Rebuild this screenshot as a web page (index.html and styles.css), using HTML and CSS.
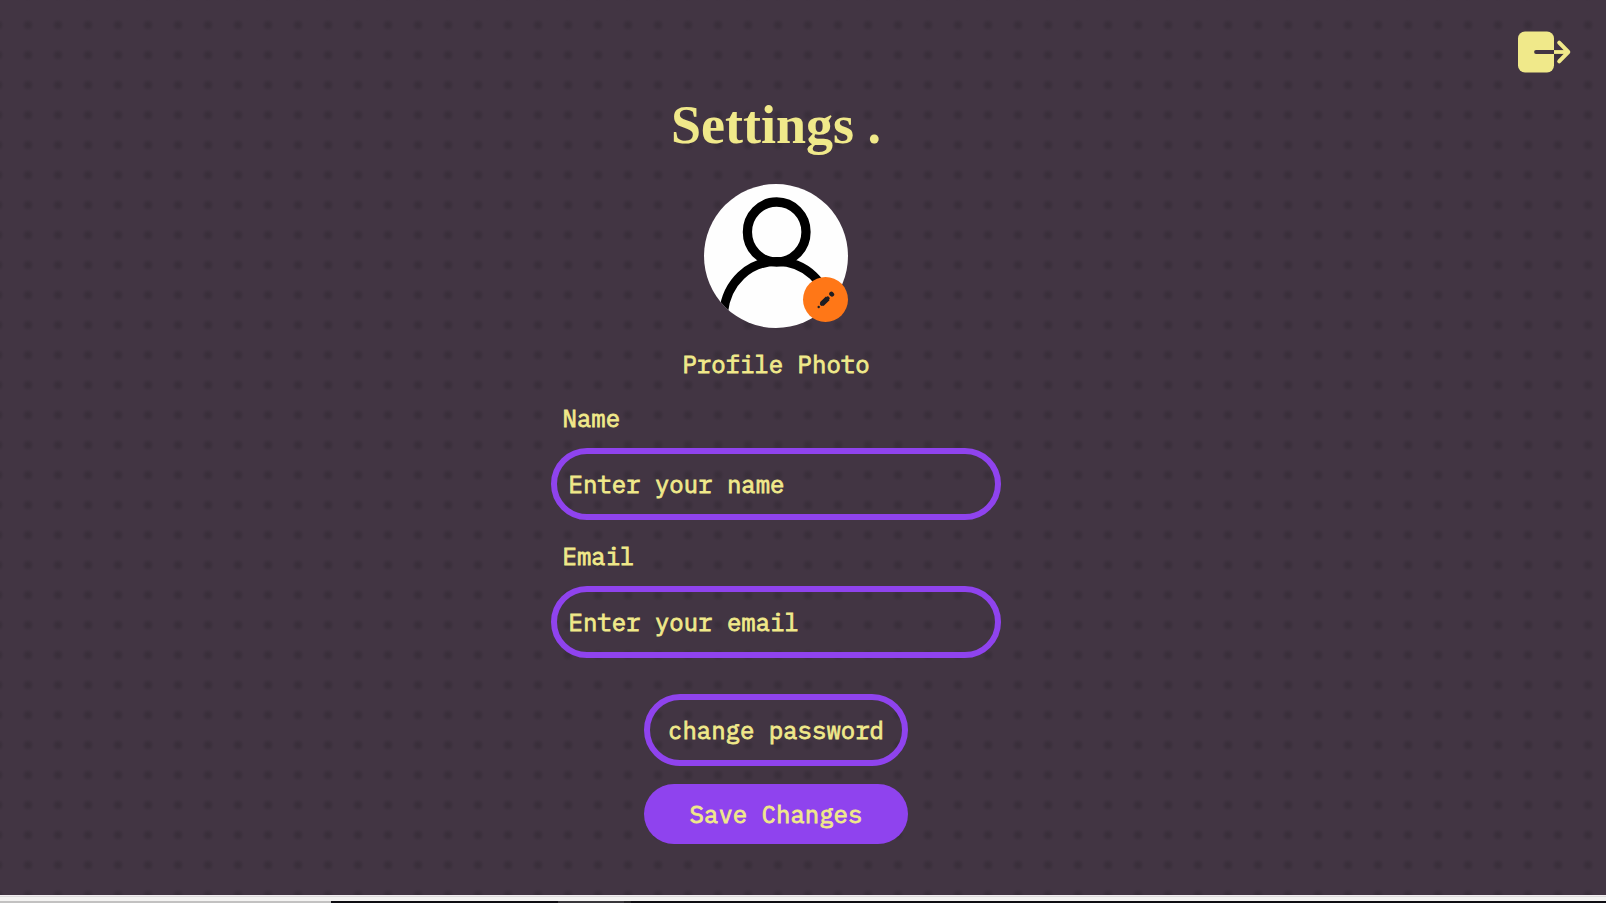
FILE: index.html
```html
<!DOCTYPE html>
<html lang="en">
<head>
<meta charset="utf-8">
<title>Settings</title>
<link rel="stylesheet" href="styles.css">
</head>
<body>
<main class="page">
  <button class="logout" aria-label="Log out">
    <svg width="56" height="44" viewBox="0 0 56 44" fill="none" stroke-linecap="round" stroke-linejoin="round">
      <rect x="1" y="0.5" width="36" height="41" rx="7" fill="#f0e98a"/>
      <path d="M19 21H35" stroke="#423543" stroke-width="3.8"/>
      <path d="M35 19.100H37V22.900H35Z" fill="#423543"/>
      <path d="M37 19.100H50V22.900H37Z" fill="#f0e98a"/>
      <path d="M42.200 11.700L51.300 21L42.200 30.300" stroke="#f0e98a" stroke-width="4"/>
    </svg>
  </button>
  <h1 class="title">Settings .</h1>
  <div class="avatar">
    <svg class="avatar-image" viewBox="0 0 144 144" fill="none" stroke="#000">
      <rect width="144" height="144" fill="#fefefe" stroke="none"/>
      <ellipse cx="72.700" cy="48" rx="29.300" ry="30" stroke-width="9.300"/>
      <path d="M19.500 128C23 98 45 77.500 73 77.500C101 77.500 123 98 127 128" stroke-width="9"/>
    </svg>
    <button class="edit" aria-label="Edit photo">
      <svg width="18" height="18" viewBox="0 0 18 18" stroke="#1f1d22" stroke-linecap="round">
        <path d="M14.400 2.900L15 3.500" stroke-width="4.400"/>
        <path d="M4.700 13.100L10.700 7.400" stroke-width="5.200" stroke-linecap="butt"/>
        <path d="M4.900 12.900L10.700 7.400" stroke-width="4"/>
        <circle cx="1.700" cy="16" r="1.200" fill="#1f1d22" stroke="none"/>
      </svg>
    </button>
  </div>
  <p class="caption">Profile Photo</p>
  <form class="form">
    <label class="label" for="name">Name</label>
    <input class="field" id="name" type="text" placeholder="Enter your name">
    <label class="label" for="email">Email</label>
    <input class="field" id="email" type="email" placeholder="Enter your email">
    <button class="button outline" type="button">change password</button>
    <button class="button solid" type="button">Save Changes</button>
  </form>
</main>
<footer class="strip">
  <div class="strip-light"></div>
  <div class="strip-bar"><span class="seg-gray"></span><span class="seg-black"></span><span class="seg-dim"></span><span class="seg-dark"></span></div>
</footer>
</body>
</html>
```
FILE: styles.css
```css
* { box-sizing: border-box; }

body {
  margin: 0;
  height: 903px;
  overflow: hidden;
  display: flex;
  flex-direction: column;
  font-family: "IBM Plex Mono", "Liberation Mono", monospace;
  font-size: 24px;
  color: #f0e98a;
}

button { border: 0; padding: 0; background: none; font: inherit; color: inherit; }

.page {
  position: relative;
  height: 895px;
  padding: 93px 54px 0 0;
  display: flex;
  flex-direction: column;
  align-items: center;
  background: #423543 radial-gradient(circle at 15px 15px, #392e3a 0, #3b303c 2.5px, rgba(59, 48, 60, 0) 6px) 13px 10px / 30px 30px;
}

.logout { position: absolute; top: 31px; right: 33px; width: 56px; height: 44px; }
.logout svg { display: block; }

.title {
  margin: 0;
  height: 91px;
  font: bold 54px/64px "Liberation Serif", serif;
}

.avatar { position: relative; width: 144px; height: 144px; }
.avatar-image { display: block; width: 144px; height: 144px; border-radius: 50%; }

.edit {
  position: absolute;
  right: 0;
  bottom: 6px;
  width: 45px;
  height: 45px;
  border-radius: 50%;
  background: #ff7717;
  display: grid;
  place-items: center;
}

.caption, .label, .field, .button { -webkit-text-stroke: 0.8px currentColor; }

.caption { margin: 19px 0 0; line-height: 34px; }

.form {
  width: 450px;
  margin-top: 20px;
  display: flex;
  flex-direction: column;
  align-items: center;
}

.label { align-self: flex-start; height: 47px; padding-left: 11.5px; line-height: 34px; }

.field {
  width: 450px;
  height: 72px;
  margin: 0 0 19px;
  padding: 0 11.5px;
  border: 6px solid #8f43ee;
  border-radius: 36px;
  background: transparent;
  color: inherit;
  font: inherit;
  outline: none;
}

.field::placeholder { color: #f0e98a; opacity: 1; }

.button { width: 264px; }
.outline { height: 72px; margin-top: 17px; border: 6px solid #8f43ee; border-radius: 36px; }
.solid { height: 60px; margin-top: 18px; border-radius: 30px; background: #8f43ee; }

.strip { height: 8px; display: flex; flex-direction: column; }
.strip-light { height: 6px; background: linear-gradient(#f2edf1 0 1px, #dedcdd 1px 2px, #f3f2f1 2px); }
.strip-bar { height: 2px; display: flex; background: #0e0d12; }
.seg-gray { width: 331px; background: #c2c1c1; }
.seg-black { width: 227px; }
.seg-dim { width: 66px; background: #39373b; }
.seg-dark { width: 7px; background: #242326; }
```
